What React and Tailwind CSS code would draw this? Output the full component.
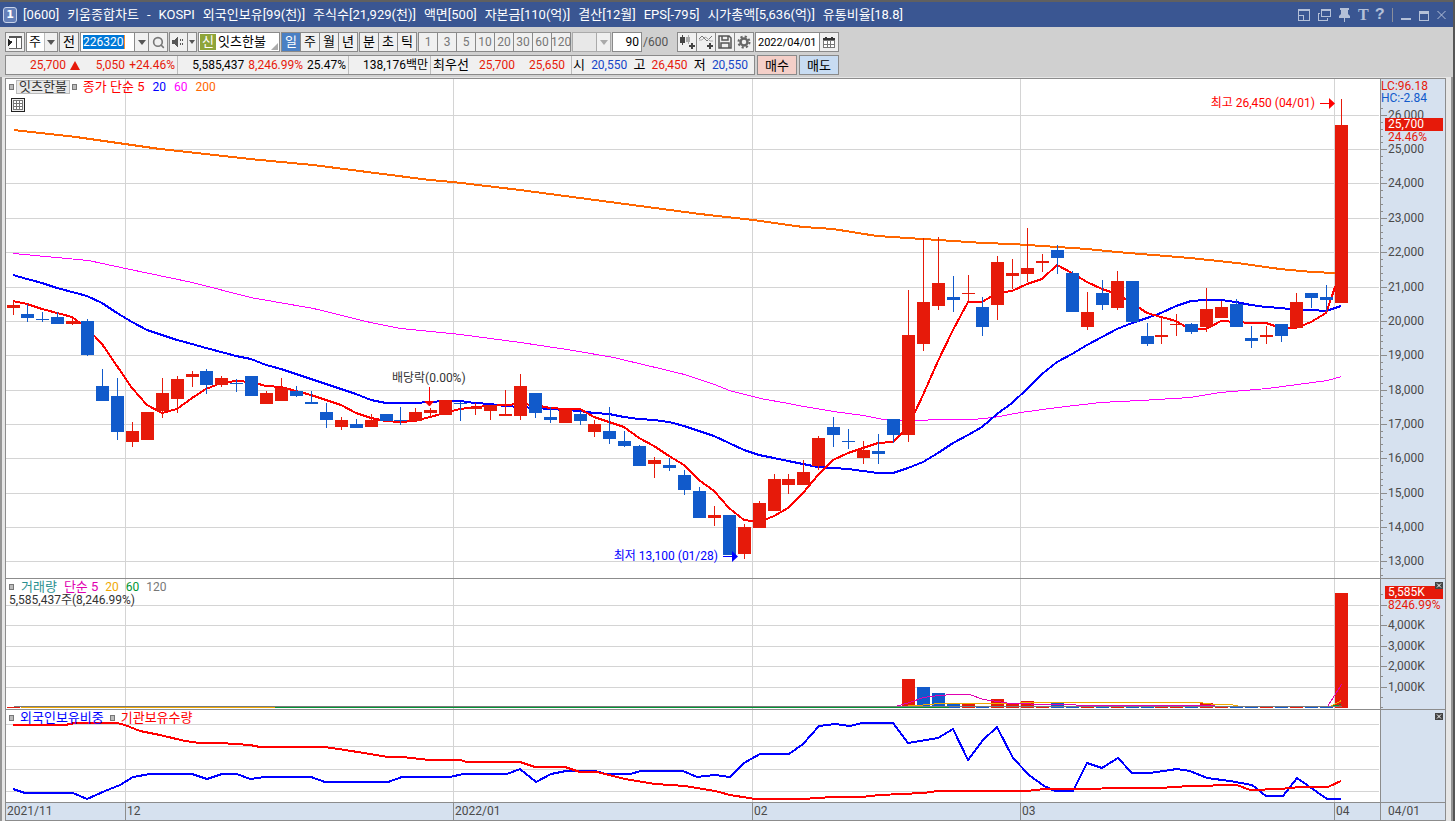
import { useState } from 'react';
import { Search } from 'lucide-react';

const UP = '#e61a0a';
const DOWN = '#115acb';
const GRID = '#d4d4d4';
const AXIS = '#8c8c8c';

const FIRST_X = 13;
const STEP = 14.922;
const xOf = (i) => Math.floor(FIRST_X + i * STEP);

// [direction, high, body top, body bottom, low]
const candles = [
  [1, 301, 305, 308, 315], [0, 304, 314, 318, 322], [0, 312, 319, 320, 322], [0, 312, 317, 324, 324],
  [1, 319, 321, 324, 325], [0, 319, 321, 355, 356], [0, 369, 386, 401, 401], [0, 378, 396, 432, 440],
  [1, 422, 431, 442, 447], [1, 412, 412, 440, 440], [1, 378, 393, 411, 418], [1, 376, 379, 399, 413],
  [1, 371, 374, 377, 387], [0, 369, 371, 385, 394], [1, 376, 378, 385, 387], [0, 379, 383, 384, 392],
  [0, 376, 376, 396, 396], [1, 391, 393, 404, 404], [1, 378, 388, 401, 401], [0, 386, 391, 396, 397],
  [0, 391, 402, 404, 404], [0, 403, 412, 420, 428], [1, 417, 420, 427, 430], [0, 419, 424, 428, 428],
  [1, 414, 420, 427, 427], [0, 414, 414, 421, 421], [0, 407, 420, 421, 425], [1, 408, 412, 421, 421],
  [1, 408, 410, 413, 418], [1, 400, 400, 415, 415], [0, 402, 403, 404, 421], [1, 403, 407, 409, 415],
  [1, 405, 405, 411, 420], [1, 390, 414, 416, 416], [1, 374, 386, 416, 420], [0, 393, 393, 413, 418],
  [0, 407, 417, 420, 423], [1, 410, 410, 423, 423], [0, 411, 414, 421, 425], [1, 420, 424, 432, 437],
  [0, 407, 431, 439, 444], [0, 431, 441, 446, 447], [0, 445, 446, 466, 466], [1, 457, 460, 464, 478],
  [0, 458, 465, 468, 471], [0, 470, 475, 490, 495], [0, 487, 491, 518, 518], [1, 506, 515, 518, 526],
  [0, 515, 515, 555, 555], [1, 524, 527, 554, 559], [1, 501, 503, 528, 528], [1, 474, 479, 511, 511],
  [1, 474, 479, 485, 494], [1, 460, 472, 485, 485], [1, 436, 438, 466, 470], [0, 417, 427, 435, 447],
  [0, 429, 441, 442, 449], [1, 441, 450, 458, 464], [0, 434, 451, 454, 464], [0, 419, 419, 435, 443],
  [1, 290, 335, 435, 442], [1, 238, 302, 344, 351], [1, 237, 283, 306, 310], [0, 276, 297, 300, 312],
  [1, 275, 293, 294, 302], [0, 297, 307, 327, 336], [1, 256, 262, 305, 320], [1, 259, 273, 276, 289],
  [1, 228, 268, 274, 282], [1, 254, 261, 263, 272], [0, 245, 250, 258, 274], [0, 271, 273, 312, 312],
  [1, 292, 312, 327, 330], [0, 280, 293, 305, 310], [1, 271, 281, 308, 310], [0, 281, 281, 322, 322],
  [0, 323, 336, 344, 346], [1, 318, 335, 337, 344], [1, 314, 324, 325, 336], [0, 323, 324, 332, 334],
  [1, 288, 309, 327, 332], [1, 301, 307, 318, 318], [0, 299, 304, 327, 327], [0, 326, 338, 341, 348],
  [1, 326, 335, 337, 344], [0, 324, 324, 336, 342], [1, 293, 302, 328, 328], [0, 293, 293, 298, 308],
  [0, 285, 297, 300, 312], [1, 99, 125, 303, 303],
];

const ma5 = [
  301, 304, 309, 313, 317, 328, 344, 366, 388, 405, 413, 409, 398, 389, 383, 381, 382, 386, 387, 391,
  395, 400, 405, 413, 418, 421, 422, 421, 417, 413, 409, 407, 406, 405, 404, 405, 408, 409, 409, 417,
  422, 427, 438, 446, 456, 465, 480, 491, 508, 520, 522, 516, 508, 493, 475, 460, 453, 448, 443, 442,
  427, 395, 361, 330, 302, 302, 293, 291, 284, 279, 265, 273, 282, 289, 294, 303, 313, 317, 321, 330,
  329, 321, 322, 323, 323, 328, 328, 322, 313, 270,
];

const ma20 = [
  275, 279, 283, 288, 292, 296, 303, 313, 322, 330, 335, 340, 344, 348, 352, 356, 359, 365, 369, 374,
  379, 384, 389, 394, 400, 403, 403, 403, 402, 401, 401, 403, 404, 406, 407, 408, 409, 410, 411, 413,
  414, 417, 419, 420, 422, 426, 431, 436, 443, 450, 455, 458, 461, 464, 467, 468, 469, 471, 473, 473,
  468, 462, 453, 443, 435, 427, 414, 403, 389, 374, 362, 354, 345, 337, 329, 323, 318, 313, 306, 301,
  300, 300, 302, 305, 307, 308, 310, 310, 311, 306,
];

const ma60 = [
  [13, 253], [88, 260], [125, 268], [192, 282], [250, 297], [313, 308], [370, 322], [400, 328],
  [460, 334], [520, 342], [573, 350], [613, 357], [655, 367], [684, 374], [714, 384], [729, 390],
  [760, 398], [788, 403], [803, 406], [833, 411], [863, 415], [883, 419], [900, 420], [923, 420],
  [933, 419], [973, 419], [993, 417], [1020, 412], [1057, 407], [1100, 402], [1140, 400], [1190, 397],
  [1220, 392], [1267, 388], [1327, 380], [1341, 376],
];

const ma200 = [
  [14, 130], [40, 133], [76, 137], [125, 144], [160, 149], [205, 154], [250, 159], [313, 165],
  [375, 173], [430, 180], [453, 182], [520, 190], [610, 202], [700, 214], [753, 220], [803, 227],
  [833, 229], [877, 236], [923, 239], [983, 243], [1012, 244], [1057, 247], [1087, 249], [1117, 252],
  [1190, 258], [1237, 263], [1280, 269], [1312, 272], [1335, 273],
];

const priceLines = [115, 149, 183, 218, 252, 287, 321, 355, 390, 424, 458, 493, 527, 561];
const volumeLines = [605, 625, 646, 666, 687];
const holdingLines = [724, 746, 769, 791];
const monthLines = [125, 453, 752, 1020, 1334];

// candle index -> top of the volume bar
const volumeTops = { 60: 679, 61: 687, 62: 693, 63: 704, 64: 704, 66: 699, 67: 704, 68: 701, 70: 703, 80: 703, 89: 593 };

const volumeMa = [
  { color: '#009432', points: [[274, 707], [938, 707], [960, 706], [1330, 706], [1341, 704]] },
  { color: '#f0a800', points: [[20, 707], [274, 707]] },
  { color: '#f0a800', points: [[900, 706], [930, 704], [938, 703], [1018, 703], [1022, 702], [1198, 702], [1215, 704], [1230, 704], [1240, 706], [1330, 706], [1341, 700]] },
  { color: '#e000b0', points: [[895, 706], [909, 702], [923, 697], [938, 695], [953, 694], [969, 694], [983, 699], [997, 701], [1010, 703], [1050, 704], [1100, 705], [1327, 706], [1341, 684]] },
  { color: '#7a7a7a', points: [[13, 706], [1341, 706]] },
];

const foreign = [
  [13, 789], [25, 793], [73, 793], [87, 799], [105, 791], [120, 785], [133, 777], [150, 774], [192, 774],
  [207, 779], [222, 774], [237, 774], [250, 779], [265, 777], [311, 777], [325, 782], [388, 782], [402, 777],
  [450, 777], [463, 774], [507, 774], [520, 769], [536, 782], [551, 774], [566, 771], [595, 771], [606, 774],
  [630, 774], [641, 771], [683, 771], [697, 777], [715, 775], [730, 777], [744, 763], [760, 754], [789, 754],
  [803, 744], [819, 726], [835, 724], [850, 726], [862, 723], [893, 723], [908, 743], [938, 738], [953, 729],
  [968, 760], [983, 740], [997, 727], [1013, 758], [1029, 775], [1044, 786], [1055, 791], [1073, 791],
  [1087, 763], [1102, 768], [1118, 758], [1132, 773], [1150, 773], [1177, 769], [1190, 771], [1207, 778],
  [1230, 781], [1252, 785], [1266, 796], [1283, 796], [1297, 778], [1327, 799], [1341, 799],
];

const institution = [
  [13, 725], [65, 725], [75, 723], [117, 723], [125, 725], [140, 731], [160, 735], [185, 741], [200, 743],
  [220, 743], [250, 745], [260, 747], [325, 747], [345, 750], [370, 754], [388, 757], [402, 757], [430, 760],
  [460, 760], [467, 762], [520, 762], [535, 767], [565, 767], [580, 772], [597, 772], [625, 779], [655, 784],
  [685, 786], [715, 791], [730, 795], [755, 799], [803, 799], [833, 797], [862, 797], [880, 795], [923, 793],
  [938, 791], [1027, 791], [1045, 789], [1160, 788], [1190, 786], [1237, 785], [1250, 790], [1280, 789],
  [1300, 787], [1328, 787], [1341, 781],
];

const titleParts = [
  '[0600]', '키움종합차트', '-', 'KOSPI', '외국인보유[99(천)]', '주식수[21,929(천)]', '액면[500]',
  '자본금[110(억)]', '결산[12월]', 'EPS[-795]', '시가총액[5,636(억)]', '유통비율[18.8]',
];

const toPoints = (points) => points.map(([x, y]) => `${x},${y}`).join(' ');
const seriesPoints = (values) => values.map((y, i) => `${xOf(i)},${y}`).join(' ');

function Line({ points, color, width = 2 }) {
  return (
    <polyline
      points={points}
      fill="none"
      stroke={color}
      strokeWidth={width}
      strokeLinejoin="round"
      shapeRendering="crispEdges"
      transform={width === 1 ? 'translate(0.5 0.5)' : undefined}
    />
  );
}

function Plot({ top, height, lines, className, children }) {
  return (
    <svg
      viewBox={`6 ${top} 1374 ${height}`}
      preserveAspectRatio="none"
      className={`block w-full ${className}`}
      shapeRendering="crispEdges"
      aria-hidden="true"
    >
      {lines.map((y) => <rect key={y} x="6" y={y} width="1373" height="1" fill={GRID} />)}
      {monthLines.map((x) => <rect key={x} x={x} y={top} width="1" height={height} fill={GRID} />)}
      {children}
    </svg>
  );
}

function Axis({ top, height, major, minor, labels, className, children }) {
  return (
    <div className="relative w-[65px] shrink-0 border-l border-[#8c8c8c] bg-[#d6e1ef]">
      <svg viewBox={`1381 ${top} 64 ${height}`} className={`block w-[64px] ${className}`}>
        {major.map((y) => <rect key={y} x="1381" y={y} width="6" height="1" fill={AXIS} />)}
        {minor.map((y) => <rect key={y} x="1381" y={y} width="2" height="1" fill={AXIS} />)}
        {labels.map(([y, text]) => (
          <text key={text} x="1388" y={y + 4} fontSize="12" fill="#4a4a4a">{text}</text>
        ))}
      </svg>
      {children}
    </div>
  );
}

function Marker() {
  return <i className="block h-[6px] w-[5px] border border-[#777] bg-[#bbb]" />;
}

function Arrow({ muted }) {
  return (
    <svg width="8" height="5" viewBox="0 0 8 5" aria-hidden="true">
      <path d="M0 0h8L4 5z" fill={muted ? '#aaa' : '#555'} />
    </svg>
  );
}

function ToolButton({ label, active, muted, className = '', children }) {
  const tone = active
    ? 'bg-[#4a80c4] text-[13px] text-white'
    : muted ? 'bg-[#f0f0f0] text-xs text-[#777]' : 'bg-[#f0f0f0] text-[13px] text-black';
  return (
    <button
      type="button"
      aria-label={label}
      className={`-ml-px flex h-5 items-center justify-center border border-[#8a8a8a] ${tone} ${className}`}
    >
      {children}
    </button>
  );
}

function TitleBar() {
  return (
    <header className="flex h-[27px] items-center border-t-2 border-[#606060] bg-[#3a5692] pl-[3px] pr-[7px] text-white">
      <span className="mr-[6px] flex h-4 w-[14px] items-center justify-center rounded-[3px] border border-[#c9d4ea] bg-[#6580b8] font-['DejaVu_Sans'] text-[11px] font-bold">
        1
      </span>
      <h1 className="flex gap-2 text-[13px] whitespace-nowrap">
        {titleParts.map((part) => <span key={part}>{part}</span>)}
      </h1>
      <div className="ml-auto flex items-center gap-2 text-[#b4c0d8]">
        <button type="button" aria-label="축소">
          <svg width="12" height="12" viewBox="0 0 12 12" fill="currentColor" shapeRendering="crispEdges">
            <path d="M0 0h12v12H0zM1 2v4h5v5h5V2zM1 7v4h4V7z" fillRule="evenodd" />
          </svg>
        </button>
        <button type="button" aria-label="복제">
          <svg width="13" height="12" viewBox="0 0 13 12" fill="currentColor" shapeRendering="crispEdges">
            <path d="M3 0h10v8H3zM4 2v5h8V2z" fillRule="evenodd" />
            <path d="M0 4h2v1H1v6h8v-2h1v3H0z" />
          </svg>
        </button>
        <button type="button" aria-label="고정">
          <svg width="11" height="14" viewBox="0 0 11 14" fill="currentColor">
            <path d="M1 0h9v2H9v4l2 2v2H6v4H5v-4H0V8l2-2V2H1z" />
          </svg>
        </button>
        <button type="button" aria-label="글꼴" className="w-[9px] font-['Liberation_Serif'] text-base leading-none font-bold">T</button>
        <button type="button" aria-label="도움말" className="w-[9px] font-['Liberation_Mono'] text-base leading-none font-bold">?</button>
        <i className="h-[14px] w-px bg-[#8a8f9c]" />
        <button type="button" aria-label="최소화">
          <svg width="10" height="12" viewBox="0 0 10 12"><path d="M0 9h10v2H0z" fill="currentColor" /></svg>
        </button>
        <button type="button" aria-label="최대화">
          <svg width="10" height="12" viewBox="0 0 10 12"><path d="M0 2h10v10H0zM1 5v6h8V5z" fill="currentColor" fillRule="evenodd" /></svg>
        </button>
        <button type="button" aria-label="닫기">
          <svg width="9" height="10" viewBox="0 0 9 10" stroke="currentColor"><path d="M.5 1l8 8M8.500 1l-8 8" /></svg>
        </button>
      </div>
    </header>
  );
}

function Toolbar() {
  const [code, setCode] = useState('226320');
  const [count, setCount] = useState('90');
  const [date, setDate] = useState('2022/04/01');

  return (
    <div className="flex h-5 items-center gap-[2px] whitespace-nowrap">
      <ToolButton label="목록 열기" className="w-5">
        <svg width="14" height="14" viewBox="0 0 14 14" shapeRendering="crispEdges" aria-hidden="true">
          <path d="M1 1h12v12H1z" fill="#fff" stroke="#666" />
          <path d="M1 1h12v2H1zM8 2h1v11H8z" fill="#555" />
          <path d="M0 3h2v10H0z" fill="#f0f0f0" />
          <path d="M0 4l5 3-5 4z" fill="#222" />
        </svg>
      </ToolButton>
      <div className="relative -ml-px h-5 w-8 border border-[#8a8a8a] bg-white">
        <select aria-label="종목 구분" className="block h-full w-full appearance-none pl-[2px] text-[13px] leading-[18px] outline-none">
          <option>주</option>
        </select>
        <span className="pointer-events-none absolute inset-y-0 right-0 flex w-[13px] items-center justify-center border-l border-[#bbb] bg-[#f0f0f0]"><Arrow /></span>
      </div>
      <ToolButton className="w-5">전</ToolButton>
      <div className="-ml-px flex">
        <div className="flex h-5 w-[55px] items-center border border-[#8a8a8a] bg-white pl-[2px]">
          <input aria-label="종목코드" value={code} onChange={(e) => setCode(e.target.value)} className="h-[14px] w-[42px] border-r border-[#ff8c28] bg-[#0078d7] text-white outline-none" />
        </div>
        <ToolButton label="종목 목록" className="w-[15px]"><Arrow /></ToolButton>
        <ToolButton label="종목 검색" className="w-5"><Search className="h-[13px] w-[13px] text-[#777]" strokeWidth={3} /></ToolButton>
      </div>
      <div className="flex">
        <ToolButton label="소리" className="w-[19px]">
          <svg width="13" height="12" viewBox="0 0 13 12" fill="#555" shapeRendering="crispEdges" aria-hidden="true">
            <path d="M0 4h2l4-4v12L2 8H0zM8 3h1v2H8zM10 3h1v2h-1zM8 7h1v2H8zM10 7h1v2h-1z" />
          </svg>
        </ToolButton>
        <ToolButton label="소리 설정" className="w-[10px]"><svg width="6" height="4" viewBox="0 0 6 4"><path d="M0 0h6L3 4z" fill="#555" /></svg></ToolButton>
      </div>
      <div className="relative -ml-px flex h-5 w-[82px] items-center gap-[2px] border border-[#8a8a8a] bg-white pl-px text-[13px]">
        <span className="flex h-4 w-4 items-center justify-center bg-[#8fa53a] text-white">신</span>
        <span>잇츠한불</span>
        <svg className="absolute right-px bottom-px" width="7" height="7" viewBox="0 0 7 7" aria-hidden="true"><path d="M7 0v7H0z" fill="#aaa" /></svg>
      </div>
      <div className="flex">
        <ToolButton active className="w-5">일</ToolButton>
        <ToolButton className="w-5">주</ToolButton>
        <ToolButton className="w-5">월</ToolButton>
        <ToolButton className="w-5">년</ToolButton>
      </div>
      <div className="flex">
        <ToolButton className="w-5">분</ToolButton>
        <ToolButton className="w-5">초</ToolButton>
        <ToolButton className="w-5">틱</ToolButton>
      </div>
      <div className="flex">
        {['1', '3', '5', '10', '20', '30', '60', '120'].map((unit) => (
          <ToolButton key={unit} muted className="w-5">{unit}</ToolButton>
        ))}
      </div>
      <div className="relative -ml-px h-5 w-[39px] border border-[#aaa] bg-[#e8e8e8]">
        <select aria-label="단위" disabled className="h-full w-full appearance-none"><option></option></select>
        <span className="pointer-events-none absolute inset-y-0 right-0 flex w-[14px] items-center justify-center border-l border-[#aaa] bg-[#f0f0f0]"><Arrow muted /></span>
      </div>
      <label className="-ml-px flex h-5 w-16 items-center text-[#555]">
        <input aria-label="조회 봉수" value={count} onChange={(e) => setCount(e.target.value)} className="mr-px h-5 w-[30px] border border-[#8a8a8a] bg-white pr-[2px] text-right text-black outline-none" />
        /600
      </label>
      <div className="flex">
        <ToolButton label="차트 추가" className="w-5">
          <svg width="16" height="16" viewBox="0 0 16 16" shapeRendering="crispEdges" aria-hidden="true">
            <path d="M1 3h5v6H1zM3 1h1v10H3z" fill="#444" />
            <path d="M7 3h4v5H7zM9 1h1v9H9z" fill="#aaa" />
            <path d="M12 9h2v2h2v2h-2v2h-2v-2h-2v-2h2z" fill="#444" />
          </svg>
        </ToolButton>
        <ToolButton label="지표 추가" className="w-5">
          <svg width="16" height="16" viewBox="0 0 16 16" aria-hidden="true">
            <path d="M1 5l3-3 5 5 5-5" fill="none" stroke="#777" />
            <path d="M1 6h3l3-3 2 1 3 3h3" fill="none" stroke="#aaa" />
            <path d="M11 9h2v2h2v2h-2v2h-2v-2H9v-2h2z" fill="#444" />
          </svg>
        </ToolButton>
        <ToolButton label="저장" className="w-5">
          <svg width="14" height="14" viewBox="0 0 14 14" fill="none" stroke="#555" strokeWidth="1.500" aria-hidden="true">
            <path d="M1 1h10l2 2v10H1zM4 1v4h6V1M3 13V8h8v5" />
          </svg>
        </ToolButton>
        <ToolButton label="설정" className="w-5">
          <svg width="14" height="14" viewBox="0 0 14 14" fill="none" stroke="#666" aria-hidden="true">
            <circle cx="7" cy="7" r="3.500" strokeWidth="2.500" />
            <circle cx="7" cy="7" r="5.500" strokeWidth="2" strokeDasharray="2.200 2.120" />
          </svg>
        </ToolButton>
      </div>
      <div className="-ml-px flex">
        <input aria-label="조회 일자" value={date} onChange={(e) => setDate(e.target.value)} className="h-5 w-[65px] border border-[#8a8a8a] bg-white pl-[2px] text-[11px] outline-none" />
        <ToolButton label="달력" className="w-5">
          <svg width="12" height="11" viewBox="0 0 12 11" shapeRendering="crispEdges" aria-hidden="true">
            <path d="M0 1h12v10H0z" fill="#777" />
            <path d="M0 1h12v2H0zM2 0h2v2H2zM8 0h2v2H8z" fill="#333" />
            <path d="M1 4h3v3H1zM5 4h2v3H5zM8 4h3v3H8zM1 8h3v2H1zM5 8h2v2H5zM8 8h3v2H8z" fill="#fff" />
          </svg>
        </ToolButton>
      </div>
    </div>
  );
}

function QuoteBar() {
  return (
    <div className="mt-[3px] -ml-px flex h-5 gap-[2px] whitespace-nowrap">
      <div className="flex h-5 w-[750px] items-center border border-[#8a8a8a] bg-[#f0f0f0] text-right text-black">
        <div className="flex h-full w-[172px] items-center border-r border-[#bbb] pr-[2px] text-[#e61a0a]">
          <span className="w-[60px]">25,700</span>
          <svg className="ml-1" width="10" height="9" viewBox="0 0 10 9" aria-hidden="true"><path d="M5 0l5 9H0z" fill={UP} /></svg>
          <span className="ml-auto">5,050</span>
          <span className="w-[50px]">+24.46%</span>
        </div>
        <div className="flex h-full w-[171px] items-center justify-end gap-1 border-r border-[#bbb] pr-[2px]">
          <span>5,585,437</span>
          <span className="text-[#e61a0a]">8,246.99%</span>
          <span>25.47%</span>
        </div>
        <div className="h-full w-[82px] border-r border-[#bbb] pr-[2px]">138,176백만</div>
        <div className="flex h-full w-[141px] items-center border-r border-[#bbb] pl-[2px]">
          <span className="text-[13px]">최우선</span>
          <span className="ml-auto text-[#e61a0a]">25,700</span>
          <span className="mr-[6px] w-[50px] text-[#e61a0a]">25,650</span>
        </div>
        <div className="flex flex-1 items-center justify-between pr-[6px] pl-px">
          <span className="text-[13px]">시</span>
          <span className="text-[#1446c8]">20,550</span>
          <span className="text-[13px]">고</span>
          <span className="text-[#e61a0a]">26,450</span>
          <span className="text-[13px]">저</span>
          <span className="text-[#1446c8]">20,550</span>
        </div>
      </div>
      <button type="button" className="h-5 w-10 border border-[#8a8a8a] bg-[#f4cfc8] text-[13px] leading-none">매수</button>
      <button type="button" className="h-5 w-10 border border-[#8a8a8a] bg-[#c8dcf2] text-[13px] leading-none">매도</button>
    </div>
  );
}

function PricePane() {
  const minor = [];
  for (let i = -1; i < 68; i++) {
    if (i % 5 !== 0) minor.push(Math.round(115 + i * 6.86));
  }

  return (
    <section className="flex border-b border-[#8c8c8c]">
      <div className="relative min-w-0 flex-1">
        <Plot top={79} height={499} lines={priceLines} className="h-[499px]">
          <Line points={toPoints(ma200)} color="#ff6600" />
          <Line points={toPoints(ma60)} color="#ff00ff" width={1} />
          <Line points={seriesPoints(ma20)} color="#0000ff" />
          <Line points={seriesPoints(ma5)} color="#ff0000" />
          {candles.map(([up, high, top, bottom, low], i) => (
            <g key={i} fill={up ? UP : DOWN}>
              <rect x={xOf(i)} y={high} width="1" height={low - high} />
              <rect x={xOf(i) - 6} y={top} width="13" height={bottom - top} />
            </g>
          ))}
        </Plot>
        <div className="absolute top-0 left-[3px] flex h-4 items-center gap-[2px] whitespace-nowrap">
          <Marker />
          <span className="flex h-[14px] items-center border border-[#bbb] bg-[#e8e8e8] px-[2px] text-[13px] text-[#333]">잇츠한불</span>
          <Marker />
          <span className="ml-1 flex gap-2 text-[#ff0000]">
            <span className="text-[13px]">종가 단순 5</span>
            <span className="text-[#0000ff]">20</span>
            <span className="text-[#ff00ff]">60</span>
            <span className="text-[#ff6600]">200</span>
          </span>
        </div>
        <button type="button" aria-label="데이터 표" className="absolute top-[19px] left-[5px]">
          <svg width="14" height="14" viewBox="0 0 14 14" shapeRendering="crispEdges">
            <path d="M0 0h14v14H0z" fill="#222" />
            <path d="M1 1h12v12H1z" fill="#eee" />
            <path d="M2 2h10v10H2z" fill="#777" />
            <path d="M3 3h2v2H3zM6 3h2v2H6zM9 3h2v2H9zM3 6h2v2H3zM6 6h2v2H6zM9 6h2v2H9zM3 9h2v2H3zM6 9h2v2H6zM9 9h2v2H9z" fill="#fff" />
          </svg>
        </button>
        <div className="absolute top-[15px] right-[45px] flex items-center gap-[5px] whitespace-nowrap text-[#ff0000]">
          최고 26,450 (04/01)
          <svg width="15" height="12" viewBox="0 0 15 12" aria-hidden="true"><path d="M0 6h9V1l6 5.500-6 5.500V7H0z" fill="currentColor" /></svg>
        </div>
        <div className="absolute top-[468px] right-[642px] flex items-center gap-[5px] whitespace-nowrap text-[#0000ff]">
          최저 13,100 (01/28)
          <svg width="15" height="12" viewBox="0 0 15 12" aria-hidden="true"><path d="M0 6h9V1l6 5.500-6 5.500V7H0z" fill="currentColor" /></svg>
        </div>
        <div className="absolute top-[290px] left-[386px] flex flex-col items-center whitespace-nowrap text-[#333]">
          배당락(0.00%)
          <svg width="10" height="20" viewBox="0 0 10 20" aria-hidden="true"><path d="M5 0h1v14h4l-4 5H5l-5-5h5z" fill="#ff0000" /></svg>
        </div>
      </div>
      <Axis
        top={79}
        height={499}
        major={priceLines}
        minor={minor}
        labels={priceLines.map((y, i) => [y, `${26 - i},000`])}
        className="h-[499px]"
      >
        <div className="absolute inset-x-0 top-px leading-3">
          <p className="text-[#e61a0a]">LC:96.18</p>
          <p className="text-[#115acb]">HC:-2.84</p>
        </div>
        <div className="absolute top-[39px] right-[2px] left-1 leading-3">
          <p className="h-[13px] bg-[#e61a0a] pl-[3px] text-white">25,700</p>
          <p className="pl-[3px] text-[#e61a0a]">24.46%</p>
        </div>
      </Axis>
    </section>
  );
}

function CloseBox() {
  return (
    <button type="button" aria-label="지표 닫기" className="absolute top-[3px] right-[2px]">
      <svg width="8" height="7" viewBox="0 0 8 7">
        <path d="M0 0h8v7H0z" fill="#444" />
        <path d="M2 1.500l4 4M6 1.500l-4 4" stroke="#fff" />
      </svg>
    </button>
  );
}

function VolumePane() {
  return (
    <section className="flex border-b border-[#8c8c8c]">
      <div className="relative min-w-0 flex-1">
        <Plot top={579} height={130} lines={volumeLines} className="h-[130px]">
          {candles.map(([up], i) => {
            const top = volumeTops[i] ?? 707;
            const rising = up && i !== 61 && i !== 62;
            return <rect key={i} x={xOf(i) - 6} y={top} width="13" height={708 - top} fill={rising ? UP : DOWN} />;
          })}
          {volumeMa.map((ma, i) => <Line key={i} points={toPoints(ma.points)} color={ma.color} width={1} />)}
        </Plot>
        <div className="absolute top-0 left-[3px] whitespace-nowrap">
          <div className="flex h-4 items-center gap-[7px]">
            <Marker />
            <span className="text-[13px] text-[#2a9090]">거래량</span>
            <span className="text-[13px] text-[#e000b0]">단순 5</span>
            <span className="text-[#f0a800]">20</span>
            <span className="text-[#009432]">60</span>
            <span className="text-[#777]">120</span>
          </div>
          <p className="-mt-px leading-3 text-[#333]">5,585,437주(8,246.99%)</p>
        </div>
      </div>
      <Axis
        top={579}
        height={130}
        major={volumeLines}
        minor={[594, 615, 635, 656, 676, 697, 707]}
        labels={[[625, '4,000K'], [646, '3,000K'], [666, '2,000K'], [687, '1,000K']]}
        className="h-[130px]"
      >
        <div className="absolute top-[7px] right-[2px] left-1 leading-3">
          <p className="h-[13px] bg-[#e61a0a] pl-[3px] text-white">5,585K</p>
          <p className="pl-[3px] text-[#e61a0a]">8246.99%</p>
        </div>
        <CloseBox />
      </Axis>
    </section>
  );
}

function HoldingPane() {
  return (
    <section className="flex border-b border-[#8c8c8c]">
      <div className="relative min-w-0 flex-1">
        <Plot top={710} height={92} lines={holdingLines} className="h-[92px]">
          <Line points={toPoints(foreign)} color="#0000ff" />
          <Line points={toPoints(institution)} color="#ff0000" />
        </Plot>
        <div className="absolute top-0 left-[3px] flex h-4 items-center gap-[6px] text-[13px] whitespace-nowrap">
          <Marker />
          <span className="text-[#0000ff]">외국인보유비중</span>
          <Marker />
          <span className="text-[#ff0000]">기관보유수량</span>
        </div>
      </div>
      <Axis top={710} height={92} major={[]} minor={[]} labels={[]} className="h-[92px]">
        <CloseBox />
      </Axis>
    </section>
  );
}

function TimeAxis() {
  return (
    <div className="flex h-[18px] border-b border-[#8c8c8c] bg-[#d6e1ef] leading-4 text-[#4a4a4a]">
      <div className="grid min-w-0 flex-1 grid-cols-[119fr_328fr_299fr_268fr_314fr_46fr]">
        <span className="pl-px">2021/11</span>
        {['12', '2022/01', '02', '03', '04'].map((month) => (
          <span key={month} className="border-l border-[#8c8c8c] pl-px">{month}</span>
        ))}
      </div>
      <span className="w-[65px] border-l border-[#8c8c8c] pl-[7px]">04/01</span>
    </div>
  );
}

function App() {
  return (
    <div className="flex min-h-screen flex-col border-r-2 border-[#555] bg-[#d0d0d0] font-['Roboto','Noto_Sans_CJK_KR',sans-serif] text-xs leading-[18px] text-black">
      <TitleBar />
      <div className="px-[6px] pt-[5px] pb-[2px]">
        <Toolbar />
        <QuoteBar />
      </div>
      <main className="border-x-2 border-[#959595] bg-[#e6e6e6] pr-[5px] pl-[3px] pt-px">
        <div className="border-x border-t border-[#8c8c8c] bg-white">
          <PricePane />
          <VolumePane />
          <HoldingPane />
          <TimeAxis />
        </div>
      </main>
    </div>
  );
}

export default App;
